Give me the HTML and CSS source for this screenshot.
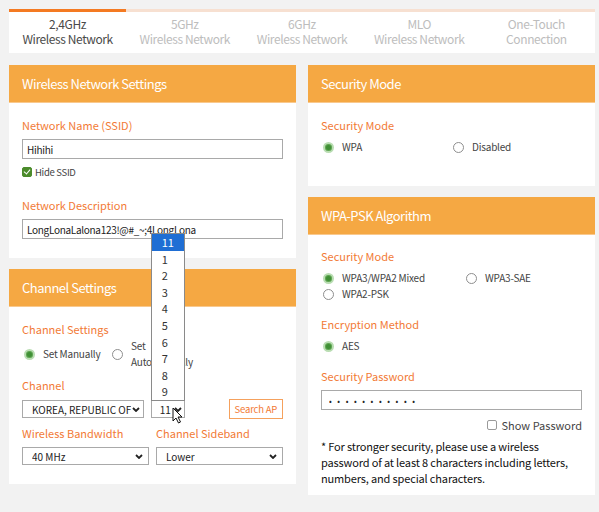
FILE: index.html
```html
<!DOCTYPE html>
<html lang="en">
<head>
    <meta charset="UTF-8">
    <meta name="viewport" content="width=device-width, initial-scale=1.0">
    <title>Wireless Settings</title>
    <link rel="stylesheet" href="styles.css">
</head>
<body>
<div class="page">
    <div class="tabs">
        <div class="tab active">2,4GHz<br>Wireless Network</div>
        <div class="tab">5GHz<br>Wireless Network</div>
        <div class="tab">6GHz<br>Wireless Network</div>
        <div class="tab">MLO<br>Wireless Network</div>
        <div class="tab">One-Touch<br>Connection</div>
    </div>

    <div class="columns">
        <div class="col">
            <section class="card">
                <h3 class="card-head">Wireless Network Settings</h3>
                <div class="card-body">
                    <div class="field-label">Network Name (SSID)</div>
                    <input class="text-input" type="text" value="Hihihi">
                    <div class="check-row">
                        <span class="check checked"></span>Hide SSID
                    </div>
                    <div class="field-label gap-lg">Network Description</div>
                    <input class="text-input" type="text" value="LongLonaLalona123!@#_~;4LongLona">
                </div>
            </section>

            <section class="card">
                <h3 class="card-head">Channel Settings</h3>
                <div class="card-body">
                    <div class="field-label">Channel Settings</div>
                    <div class="radio-group channel-mode">
                        <div class="radio-opt"><span class="radio on"></span><span>Set Manually</span></div>
                        <div class="radio-opt"><span class="radio"></span><span class="wrap-text">Set Automatically</span></div>
                    </div>
                    <div class="field-label gap-sm">Channel</div>
                    <div class="select-row">
                        <div class="select country"><span class="select-text">KOREA, REPUBLIC OF</span><svg class="chev" viewBox="0 0 8 5"><path d="M1 1l3 3 3-3"/></svg></div>
                        <div class="channel-wrap">
                            <div class="select channel"><span class="select-text">11</span><svg class="chev" viewBox="0 0 8 5"><path d="M1 1l3 3 3-3"/></svg></div>
                            <ul class="dropdown">
                                <li class="picked">11</li>
                                <li>1</li>
                                <li>2</li>
                                <li>3</li>
                                <li>4</li>
                                <li>5</li>
                                <li>6</li>
                                <li>7</li>
                                <li>8</li>
                                <li>9</li>
                            </ul>
                            <svg class="cursor" viewBox="0 0 11 17"><path d="M1 1v13l3-3 2.5 5 2-1-2.5-5h4z"/></svg>
                        </div>
                        <button class="btn-outline">Search AP</button>
                    </div>
                    <div class="pair-row">
                        <div class="pair">
                            <div class="field-label">Wireless Bandwidth</div>
                            <div class="select"><span class="select-text">40 MHz</span><svg class="chev" viewBox="0 0 8 5"><path d="M1 1l3 3 3-3"/></svg></div>
                        </div>
                        <div class="pair">
                            <div class="field-label">Channel Sideband</div>
                            <div class="select"><span class="select-text">Lower</span><svg class="chev" viewBox="0 0 8 5"><path d="M1 1l3 3 3-3"/></svg></div>
                        </div>
                    </div>
                </div>
            </section>
        </div>

        <div class="col">
            <section class="card">
                <h3 class="card-head">Security Mode</h3>
                <div class="card-body mode-body">
                    <div class="field-label">Security Mode</div>
                    <div class="radio-group mode-opts">
                        <div class="radio-opt"><span class="radio on"></span><span>WPA</span></div>
                        <div class="radio-opt"><span class="radio"></span><span>Disabled</span></div>
                    </div>
                </div>
            </section>

            <section class="card">
                <h3 class="card-head">WPA-PSK Algorithm</h3>
                <div class="card-body psk-body">
                    <div class="field-label">Security Mode</div>
                    <div class="radio-group psk-opts">
                        <div class="radio-opt"><span class="radio on"></span><span>WPA3/WPA2 Mixed</span></div>
                        <div class="radio-opt"><span class="radio"></span><span>WPA3-SAE</span></div>
                        <div class="radio-opt"><span class="radio"></span><span>WPA2-PSK</span></div>
                    </div>
                    <div class="field-label gap-md">Encryption Method</div>
                    <div class="radio-group">
                        <div class="radio-opt"><span class="radio on"></span><span>AES</span></div>
                    </div>
                    <div class="field-label gap-md">Security Password</div>
                    <input class="text-input pass" type="password" value="abcdefghijk">
                    <div class="show-pass"><span class="check"></span>Show Password</div>
                    <p class="note">* For stronger security, please use a wireless password of at least 8 characters including letters, numbers, and special characters.</p>
                </div>
            </section>
        </div>
    </div>
</div>
</body>
</html>
```

FILE: styles.css
```css
body {
    margin: 0;
    background-color: #F2F2F2;
    font-family: "Noto Sans CJK KR", "Noto Sans", sans-serif;
    font-size: 11px;
    color: #333333;
}

.page {
    padding: 9px 4px 20px 9px;
}

/* band tabs */
.tabs {
    display: grid;
    grid-template-columns: repeat(5, 1fr);
    background-color: #FFFFFF;
    border-top: 3px solid #F7E0D1;
    height: 41px;
}

.tab {
    margin-top: -3px;
    border-top: 3px solid transparent;
    text-align: center;
    font-size: 12px;
    letter-spacing: -0.4px;
    line-height: 15px;
    padding-top: 4px;
    color: #BDBDBD;
}

.tab.active {
    border-top-color: #F47A22;
    color: #4A4A4A;
}

/* two columns of cards */
.columns {
    display: grid;
    grid-template-columns: 287px 287px;
    gap: 12px;
    margin-top: 12px;
}

.card {
    background-color: #FFFFFF;
    margin-bottom: 11px;
}

.card-head {
    margin: 0;
    height: 37px;
    line-height: 37px;
    padding-left: 13px;
    background-color: #F5A843;
    border-bottom: 1px solid #F9C98E;
    color: #FFFFFF;
    font-size: 13px;
    letter-spacing: -0.5px;
    font-weight: normal;
}

.card-body {
    padding: 14px 13px 19px 13px;
}

.field-label {
    color: #F27A35;
    font-size: 11px;
    line-height: 16px;
}

.gap-sm {
    margin-top: 7px;
}

.gap-md {
    margin-top: 14px;
}

.gap-lg {
    margin-top: 18px;
}

.text-input {
    display: block;
    box-sizing: border-box;
    width: 261px;
    height: 20px;
    margin: 6px 0 0 0;
    padding: 0 4px;
    border: 1px solid #A9A9A9;
    font-family: inherit;
    font-size: 10px;
    letter-spacing: -0.3px;
    color: #222222;
    outline: none;
}

.text-input.pass {
    font-size: 8px;
    letter-spacing: 5.6px;
    padding-left: 7px;
}

.check-row {
    display: flex;
    align-items: center;
    margin-top: 6px;
    line-height: 14px;
    font-size: 9.5px;
    letter-spacing: -0.3px;
    color: #444444;
}

.check {
    box-sizing: border-box;
    width: 10px;
    height: 10px;
    margin-right: 3px;
    border: 1px solid #9A9A9A;
    border-radius: 2px;
    background-color: #FFFFFF;
    position: relative;
}

.check.checked {
    background-color: #4B8B2B;
    border-color: #4B8B2B;
}

.check.checked::after {
    content: "";
    position: absolute;
    left: 2px;
    top: 0;
    width: 3px;
    height: 5px;
    border: solid #FFFFFF;
    border-width: 0 1.5px 1.5px 0;
    transform: rotate(40deg);
}

/* radios */
.radio-group {
    display: flex;
    flex-wrap: wrap;
    margin-top: 6px;
}

.radio-opt {
    display: flex;
    align-items: center;
    line-height: 16px;
    font-size: 10px;
    letter-spacing: -0.2px;
    color: #444444;
}

.radio {
    flex: none;
    box-sizing: border-box;
    width: 11px;
    height: 11px;
    margin: 0 8px 0 2px;
    border: 1px solid #8E8E8E;
    border-radius: 50%;
    background-color: #FFFFFF;
}

.radio.on {
    border: 2px solid #B9DDB2;
    background-color: #3F8F35;
    box-shadow: inset 0 0 0 1px #5FA652;
}

.mode-opts .radio-opt {
    width: 130px;
}

.psk-opts .radio-opt:nth-child(1) {
    width: 143px;
}

.psk-opts .radio-opt:nth-child(2) {
    width: 118px;
}

.channel-mode {
    margin-top: 1px;
}

.channel-mode .radio-opt {
    width: 88px;
}

.wrap-text {
    width: 60px;
}

/* selects */
.select {
    box-sizing: border-box;
    display: flex;
    align-items: center;
    justify-content: space-between;
    height: 18px;
    padding: 0 5px 0 9px;
    border: 1px solid #A9A9A9;
    background-color: #FFFFFF;
    font-size: 10px;
    color: #222222;
}

.select-text {
    white-space: nowrap;
    overflow: hidden;
}

.chev {
    flex: none;
    width: 8px;
    height: 5px;
    fill: none;
    stroke: #222222;
    stroke-width: 1.8;
}

.select-row {
    display: flex;
    align-items: center;
    margin-top: 6px;
}

.select.country {
    width: 123px;
    padding-right: 3px;
}

.channel-wrap {
    position: relative;
    margin-left: 7px;
}

.select.channel {
    width: 34px;
    padding: 0 2px 0 8px;
}

.dropdown {
    position: absolute;
    left: 0;
    bottom: 17px;
    width: 34px;
    box-sizing: border-box;
    margin: 0;
    padding: 0;
    list-style: none;
    border: 1px solid #8A8A8A;
    background-color: #FFFFFF;
}

.dropdown li {
    height: 16.6px;
    line-height: 16.6px;
    padding-left: 10px;
    font-size: 11px;
    color: #333333;
}

.dropdown li.picked {
    background-color: #1F6ED4;
    color: #FFFFFF;
}

.cursor {
    position: absolute;
    left: 21px;
    top: 7px;
    width: 11px;
    height: 17px;
    fill: #FFFFFF;
    stroke: #111111;
    stroke-width: 1;
}

.btn-outline {
    margin-left: 44px;
    height: 20px;
    width: 55px;
    padding: 0;
    border: 1px solid #F5A15D;
    background-color: #FFFFFF;
    color: #F27A35;
    font-family: inherit;
    font-size: 9.5px;
    letter-spacing: -0.2px;
}

.pair-row {
    display: grid;
    grid-template-columns: 127px 127px;
    gap: 7px;
    margin-top: 6px;
}

.pair .select {
    margin-top: 6px;
}

.mode-body {
    padding-bottom: 31px;
}

.psk-body {
    padding-top: 13px;
    padding-bottom: 9px;
}

.show-pass {
    display: flex;
    align-items: center;
    justify-content: flex-end;
    margin-top: 7px;
    line-height: 16px;
    font-size: 11px;
    color: #444444;
}

.show-pass .check {
    margin-right: 5px;
}

.note {
    margin: 5px 0 0 0;
    line-height: 16px;
    font-size: 11px;
    letter-spacing: -0.15px;
    color: #111111;
}
```
